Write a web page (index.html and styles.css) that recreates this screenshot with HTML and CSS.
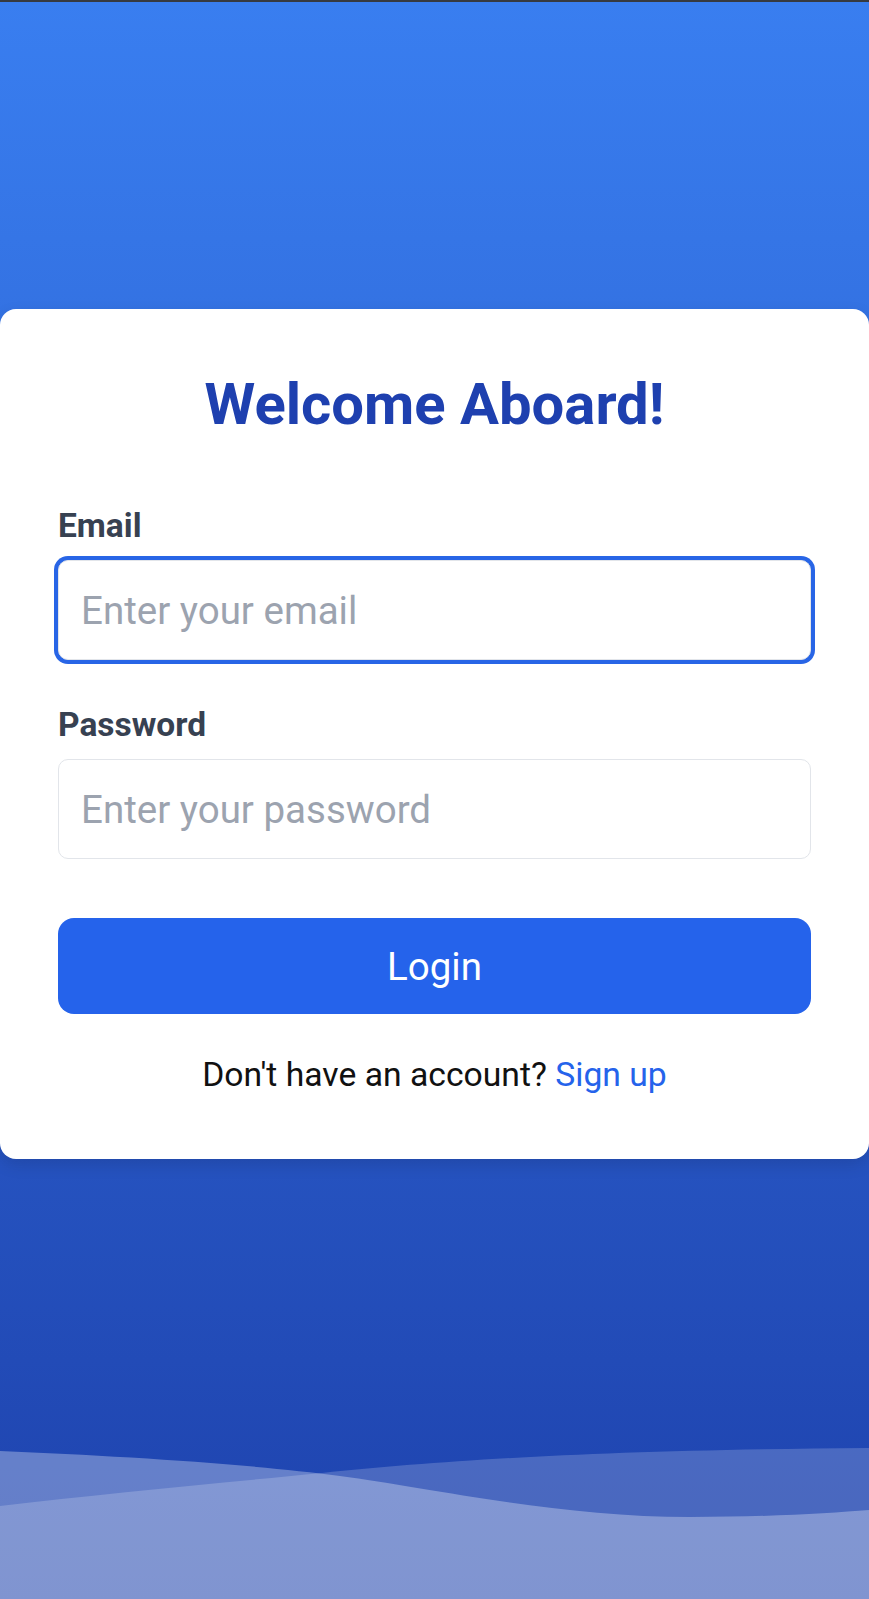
FILE: index.html
```html
<!DOCTYPE html>
<html lang="en">
<head>
<meta charset="utf-8">
<title>Login</title>
<link rel="stylesheet" href="styles.css">
</head>
<body>
<div class="topline"></div>
<div class="page">
  <div class="card">
    <h1 class="title">Welcome Aboard!</h1>
    <form class="form">
      <div class="field">
        <label class="label" for="email">Email</label>
        <input id="email" class="input input-focus" type="email" placeholder="Enter your email">
      </div>
      <div class="field">
        <label class="label" for="password">Password</label>
        <input id="password" class="input" type="password" placeholder="Enter your password">
      </div>
      <button class="btn" type="button">Login</button>
    </form>
    <p class="footer">Don't have an account? <a class="link" href="#">Sign up</a></p>
  </div>
  <svg class="waves" viewBox="0 0 869 179" preserveAspectRatio="none" xmlns="http://www.w3.org/2000/svg">
    <path d="M0,31 C120,36 250,44 340,56 C430,68 560,97 690,97 C770,97 830,93 869,90 V179 H0 Z" fill="#ffffff" fill-opacity="0.31"/>
    <path d="M0,86 C100,74 220,63 322,53 C450,40 600,30 869,28 V179 H0 Z" fill="#ffffff" fill-opacity="0.19"/>
  </svg>
</div>
</body>
</html>
```

FILE: styles.css
```css
* { box-sizing: border-box; }

html, body {
  margin: 0;
  padding: 0;
}

body {
  font-family: Roboto, "Liberation Sans", Arial, sans-serif;
  background: linear-gradient(to bottom, #397ef0 0%, #1e42ad 100%);
  height: 1599px;
  overflow: hidden;
}

.topline {
  height: 2px;
  background: #363a41;
}

.page {
  height: 1597px;
  display: flex;
  flex-direction: column;
  padding-top: 307px;
}

.card {
  background: #ffffff;
  border-radius: 16px;
  padding: 61px 58px 64px;
  box-shadow: 0 6px 16px rgba(0, 0, 0, 0.12);
}

.title {
  margin: 0 0 68px;
  font-size: 58px;
  line-height: 68px;
  font-weight: 700;
  color: #1e40af;
  text-align: center;
}

.form {
  display: flex;
  flex-direction: column;
  margin: 0;
}

.field {
  display: flex;
  flex-direction: column;
}

.field + .field {
  margin-top: 45px;
}

.label {
  font-size: 33.5px;
  line-height: 40px;
  font-weight: 700;
  color: #374151;
  margin-bottom: 14px;
}

.input {
  height: 100px;
  width: 100%;
  border: 1px solid #e2e5ea;
  border-radius: 10px;
  padding: 0 22px;
  font-family: Roboto, "Liberation Sans", Arial, sans-serif;
  font-size: 38.5px;
  color: #111827;
  background: #fff;
  outline: none;
}

.input::placeholder {
  color: #9ca3af;
}

.input-focus {
  box-shadow: 0 0 0 4px #2865e6;
}

.btn {
  margin-top: 59px;
  height: 96px;
  width: 100%;
  border: none;
  border-radius: 16px;
  background: #2563eb;
  color: #ffffff;
  font-family: Roboto, "Liberation Sans", Arial, sans-serif;
  font-size: 38.5px;
  font-weight: 400;
}

.footer {
  margin: 41px 0 0;
  text-align: center;
  font-size: 33.7px;
  line-height: 40px;
  color: #111111;
}

.link {
  color: #2563eb;
  text-decoration: none;
}

.waves {
  margin-top: auto;
  display: block;
  width: 100%;
  height: 179px;
}
```
